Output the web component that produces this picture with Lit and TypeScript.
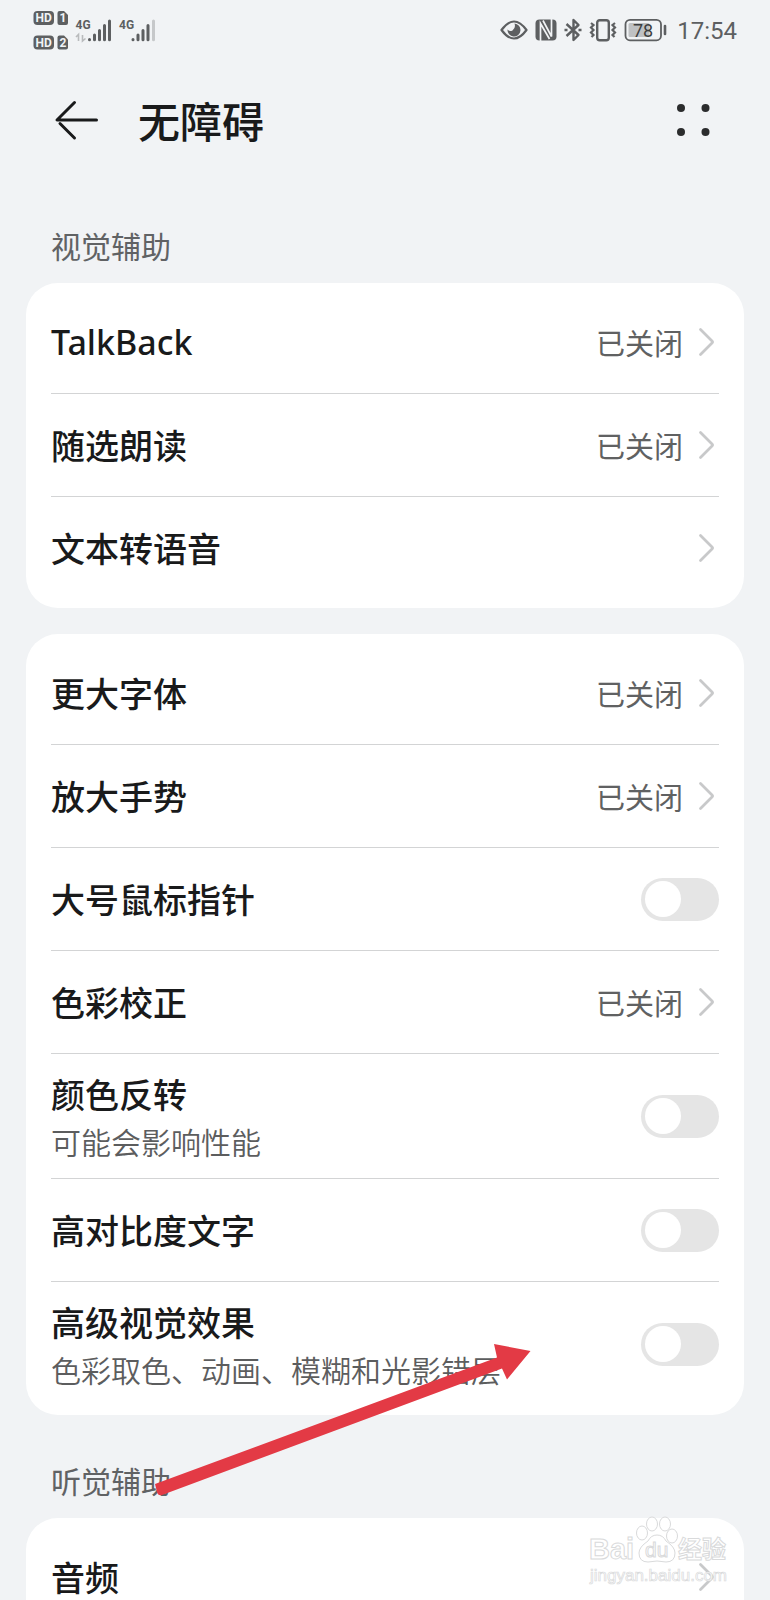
import { LitElement, html, css, nothing } from "lit";
import { customElement, property } from "lit/decorators.js";

interface Item {
  id: string;
  label: string;
  note?: string;
  value?: string;
  toggle?: boolean;
}

const VISION: Item[] = [
  { id: "talkback", label: "TalkBack", value: "已关闭" },
  { id: "select-to-speak", label: "随选朗读", value: "已关闭" },
  { id: "tts", label: "文本转语音" },
];

const DISPLAY: Item[] = [
  { id: "large-font", label: "更大字体", value: "已关闭" },
  { id: "magnify", label: "放大手势", value: "已关闭" },
  { id: "large-pointer", label: "大号鼠标指针", toggle: true },
  { id: "color-correction", label: "色彩校正", value: "已关闭" },
  { id: "invert", label: "颜色反转", note: "可能会影响性能", toggle: true },
  { id: "contrast", label: "高对比度文字", toggle: true },
  { id: "effects", label: "高级视觉效果", note: "色彩取色、动画、模糊和光影错层", toggle: true },
];

const HEARING: Item[] = [{ id: "audio", label: "音频" }];

@customElement("status-bar")
export class StatusBar extends LitElement {
  static styles = css`
    :host {
      display: block;
    }
    .bar {
      display: flex;
      justify-content: space-between;
      align-items: center;
      height: 60px;
      padding: 0 33px;
      color: #5d5f61;
    }
    .group {
      display: flex;
      align-items: center;
    }
    .right {
      gap: 7px;
    }
    svg {
      display: block;
      flex: none;
    }
    .hd {
      font: 700 12px "Roboto", sans-serif;
      fill: #f1f3f5;
    }
    .net {
      font: 700 12px "Roboto", sans-serif;
      fill: #5d5f61;
    }
    .level {
      font: 400 18px "Roboto", sans-serif;
      fill: #3c3e40;
    }
    .time {
      font: 400 24px/32px "Roboto", sans-serif;
      margin-left: 3px;
      padding-top: 2px;
    }
  `;

  render() {
    return html`
      <div class="bar">
        <div class="group">
          <svg width="124" height="44" viewBox="0 0 124 44" aria-label="信号">
            <g fill="#5d5f61">
              <rect x="0.5" y="3" width="20.500" height="14" rx="4" />
              <path d="M26.500 3h4.500l4 4v8q0 2-2 2h-6.500q-2 0-2-2v-10q0-2 2-2z" />
              <rect x="0.5" y="27.500" width="20.500" height="14" rx="4" />
              <path d="M26.500 27.500h4.500l4 4v8q0 2-2 2h-6.500q-2 0-2-2v-10q0-2 2-2z" />
            </g>
            <text class="hd" x="2.500" y="14.300">HD</text>
            <text class="hd" x="26.500" y="14.300">1</text>
            <text class="hd" x="2.500" y="38.800">HD</text>
            <text class="hd" x="26.500" y="38.800">2</text>
            <text class="net" x="42.500" y="20.500">4G</text>
            <text class="net" x="86" y="20.500">4G</text>
            <g stroke="#5d5f61" stroke-width="3" stroke-linecap="round">
              <path d="M56.500 31.500v.3M61.500 27v4.800M66.500 22.500v9.300M71.500 17.500v14.300M76.500 13v18.800" />
              <path d="M100 31.500v.3M105 27v4.800M110 22.500v9.300M115 17.500v14.300" />
              <path d="M120.500 13v18.800" stroke="#c6c8ca" />
            </g>
            <path d="M43 29l2.500-2.500v6.500M49.500 27v6l3-2.500" fill="none" stroke="#b9bbbd" stroke-width="1.600" />
          </svg>
        </div>
        <div class="group right">
          <svg width="28" height="22" viewBox="0 0 28 22" aria-hidden="true">
            <path d="M1.500 11Q14-6 26.500 11Q14 28 1.500 11z" fill="none" stroke="#5d5f61" stroke-width="2.200" stroke-linejoin="round" />
            <path d="M14.500 4.500a6.500 6.500 0 1 1-7 6q2 2.500 5 1 3.500-2.500 2-7z" fill="#5d5f61" />
          </svg>
          <svg width="22" height="22" viewBox="0 0 22 22" aria-hidden="true">
            <rect x="0.500" y="0.500" width="21" height="21" rx="4" fill="#5d5f61" />
            <path d="M5.500 22V4.500L14.500 20M16.500 0v17.500L8 1.500" fill="none" stroke="#f1f3f5" stroke-width="1.700" />
          </svg>
          <svg width="18" height="24" viewBox="0 0 18 24" aria-hidden="true">
            <path d="M2.500 6l12 11L9.500 22V2l5 5L2.500 18" fill="none" stroke="#5d5f61" stroke-width="2.400" stroke-linejoin="round" />
            <path d="M.5 12h3M14.500 12h3" stroke="#5d5f61" stroke-width="2.400" />
          </svg>
          <svg width="28" height="24" viewBox="0 0 28 24" aria-hidden="true">
            <rect x="8.200" y="2.200" width="11.600" height="20" rx="2.500" fill="none" stroke="#5d5f61" stroke-width="2.400" />
            <path d="M2 5l2.500 2L2 9.500 4.500 12 2 14.500 4.500 17 2.500 19M26 5l-2.500 2L26 9.500 23.500 12 26 14.500 23.500 17l2 2" fill="none" stroke="#5d5f61" stroke-width="2.200" />
          </svg>
          <svg width="43" height="24" viewBox="0 0 43 24" aria-label="电量 78%">
            <rect x="1.500" y="1.800" width="35.500" height="20.500" rx="4.500" fill="none" stroke="#5d5f61" stroke-width="1.800" />
            <rect x="4.500" y="5" width="21" height="14" rx="1.500" fill="#bfc1c3" />
            <path d="M41 8v8" stroke="#5d5f61" stroke-width="2.600" stroke-linecap="round" />
            <text class="level" x="9" y="18.500">78</text>
          </svg>
          <span class="time">17:54</span>
        </div>
      </div>
    `;
  }
}

@customElement("settings-card")
export class SettingsCard extends LitElement {
  @property({ attribute: false }) items: Item[] = [];

  static styles = css`
    :host {
      display: block;
    }
    .card {
      background: #fff;
      border-radius: 32px;
      padding: 7px 25px 9px;
    }
    .row {
      display: flex;
      align-items: center;
      box-sizing: border-box;
      min-height: 103px;
      color: inherit;
      text-decoration: none;
    }
    .row.tall {
      min-height: 125px;
    }
    .row + .row {
      border-top: 1px solid #d3d4d5;
    }
    .text {
      flex: 1;
      min-width: 0;
    }
    .label {
      display: block;
      font-size: 34px;
      line-height: 50px;
      font-weight: 500;
      color: #191a1b;
    }
    .latin {
      font-family: "Noto Sans", sans-serif;
    }
    .note {
      display: block;
      font-size: 30px;
      line-height: 44px;
      font-weight: 350;
      color: #5c5d5e;
    }
    .value {
      font-size: 29px;
      line-height: 44px;
      color: #606162;
      margin-right: 15px;
    }
    .chevron {
      display: block;
      flex: none;
      margin-right: 3px;
    }
    .switch {
      appearance: none;
      flex: none;
      display: flex;
      align-items: center;
      box-sizing: border-box;
      width: 78px;
      height: 43px;
      margin: 0;
      padding: 0 4px;
      border-radius: 22px;
      background: #e5e5e5;
      cursor: pointer;
    }
    .switch::before {
      content: "";
      width: 36px;
      height: 36px;
      border-radius: 50%;
      background: #fff;
    }
    .switch:checked {
      justify-content: flex-end;
      background: #0a59f7;
    }
  `;

  private renderText(item: Item) {
    const latin = /^[A-Za-z]+$/.test(item.label);
    return html`<span class="text">
      <span class="label">${latin ? html`<span class="latin">${item.label}</span>` : item.label}</span>
      ${item.note ? html`<span class="note">${item.note}</span>` : nothing}
    </span>`;
  }

  private renderItem(item: Item) {
    if (item.toggle) {
      return html`<label class="row ${item.note ? "tall" : ""}" for=${item.id}>
        ${this.renderText(item)}
        <input class="switch" type="checkbox" role="switch" id=${item.id} />
      </label>`;
    }
    return html`<a class="row" href="#${item.id}">
      ${this.renderText(item)}
      ${item.value ? html`<span class="value">${item.value}</span>` : nothing}
      <svg class="chevron" width="18" height="30" viewBox="0 0 18 30" aria-hidden="true">
        <path d="M2.500 2.500L14 14q1 1 0 2L2.500 27.500" fill="none" stroke="#c8c9ca" stroke-width="2.800" stroke-linecap="round" />
      </svg>
    </a>`;
  }

  render() {
    return html`<div class="card">${this.items.map((i) => this.renderItem(i))}</div>`;
  }
}

@customElement("app-root")
export class AppRoot extends LitElement {
  static styles = css`
    :host {
      display: block;
      position: relative;
      height: 100vh;
      overflow: hidden;
      background: #f1f3f5;
      color: #191a1b;
      font-family: "Noto Sans CJK SC", sans-serif;
    }
    .page {
      position: relative;
      height: 100%;
      overflow-y: auto;
      scrollbar-width: none;
    }
    .header {
      display: flex;
      align-items: center;
      height: 120px;
      padding: 0 54px;
    }
    .icon {
      display: block;
      padding: 0;
      border: 0;
      background: none;
      cursor: pointer;
    }
    .icon svg {
      display: block;
    }
    .title {
      flex: 1;
      margin: 0 0 0 38px;
      font-size: 42px;
      line-height: 60px;
      font-weight: 500;
    }
    .main {
      padding: 0 26px 26px;
    }
    .section {
      margin: 43px 25px 16px;
      font-size: 30px;
      line-height: 44px;
      font-weight: 400;
      color: #606264;
    }
    .stack {
      display: grid;
      gap: 26px;
    }
    .pointer {
      position: absolute;
      left: 155px;
      top: 1343px;
      pointer-events: none;
    }
    .watermark {
      position: absolute;
      right: 40px;
      bottom: 12px;
      pointer-events: none;
    }
    .brand {
      font: 700 29px "Liberation Sans", sans-serif;
    }
    .brand-cjk {
      font: 700 24px "Noto Sans CJK SC", sans-serif;
    }
    .du {
      font: 400 21px "Liberation Sans", sans-serif;
    }
    .site {
      font: 400 17px "Liberation Sans", sans-serif;
    }
  `;

  render() {
    return html`
      <div class="page">
        <status-bar></status-bar>
        <header class="header">
          <button class="icon" aria-label="返回">
            <svg width="46" height="42" viewBox="0 0 46 42">
              <path d="M20.500 3.500L3 21H42.500M6 24.500L20.500 39" fill="none" stroke="#191a1b" stroke-width="3" stroke-linecap="round" stroke-linejoin="round" />
            </svg>
          </button>
          <h1 class="title">无障碍</h1>
          <button class="icon" aria-label="更多">
            <svg width="40" height="40" viewBox="0 0 40 40" fill="#2b2c2d">
              <circle cx="5" cy="8" r="4" />
              <circle cx="29.500" cy="8" r="4" />
              <circle cx="5" cy="32" r="4" />
              <circle cx="29.500" cy="32" r="4" />
            </svg>
          </button>
        </header>
        <main class="main">
          <h2 class="section">视觉辅助</h2>
          <div class="stack">
            <settings-card .items=${VISION}></settings-card>
            <settings-card .items=${DISPLAY}></settings-card>
          </div>
          <h2 class="section">听觉辅助</h2>
          <settings-card .items=${HEARING}></settings-card>
        </main>
        <svg class="pointer" width="378" height="154" viewBox="0 0 378 154" aria-hidden="true">
          <path d="M0 141L342 14.500 339 1 375.500 8 352 36.500 347 25.500 7 152Q3 153 2 149z" fill="#e33a45" />
        </svg>
      </div>
      <svg class="watermark" width="142" height="72" viewBox="0 0 142 72" aria-label="Baidu 经验">
        <g fill="#fff" stroke="#d9dadb" stroke-width="1">
          <text class="brand" x="1" y="43">Bai</text>
          <ellipse cx="54" cy="17" rx="5.500" ry="7" />
          <ellipse cx="64" cy="8" rx="5.500" ry="7" />
          <ellipse cx="77" cy="8" rx="5.500" ry="7" />
          <ellipse cx="84" cy="20" rx="5.500" ry="7" />
          <path d="M69 19q6 0 9 6 9 6 9 12 0 9-9 9-9-2-18 0-9 0-9-9 0-6 9-12 3-6 9-6z" />
          <text class="du" x="57" y="41">du</text>
          <text class="brand-cjk" x="90" y="42">经验</text>
          <text class="site" x="2" y="65" stroke-width="0.700">jingyan.baidu.com</text>
        </g>
      </svg>
    `;
  }
}
